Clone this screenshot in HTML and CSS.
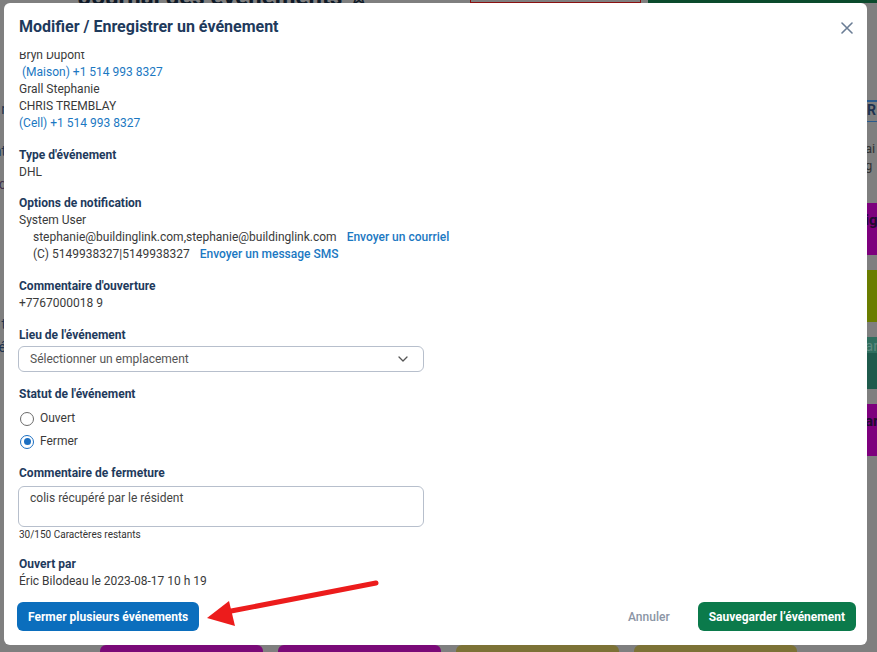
FILE: index.html
```html
<!DOCTYPE html>
<html lang="fr">
<head>
<meta charset="utf-8">
<title>Modifier / Enregistrer un événement</title>
<link rel="stylesheet" href="styles.css">
</head>
<body>
<div class="page">
  <div class="topbar">
    <span class="page-title">Journal des événements ☆</span>
    <span class="spacer"></span>
    <span class="btn-outline-red">Exporter les événements</span>
    <span class="btn-green-bg">Enregistrer un événement</span>
  </div>
  <div class="page-main">
    <div class="left-col">
      <span class="lt l1">r</span>
      <span class="lt l2">nt</span>
      <span class="lt l3">ic</span>
      <span class="lt l4">t</span>
      <span class="lt l5">é</span>
    </div>
    <div class="right-col">
      <div class="tab">R</div>
      <div class="rtext">ai<br>g</div>
      <div class="card c-purple">ig</div>
      <div class="card c-olive"></div>
      <div class="card c-teal"><span class="teal-top">ar</span></div>
      <div class="card c-purple">ar</div>
    </div>
  </div>
  <div class="bottom-cards">
    <div class="bcard b-purple"></div>
    <div class="bcard b-purple"></div>
    <div class="bcard b-olive"></div>
    <div class="bcard b-olive"></div>
  </div>

  <div class="modal">
    <div class="modal-header">
      <h2 class="modal-title">Modifier / Enregistrer un événement</h2>
      <button class="close-btn" aria-label="Fermer">
        <svg width="12" height="12" viewBox="0 0 12 12"><path d="M1 1 L11 11 M11 1 L1 11" stroke="#6a7d95" stroke-width="1.6" stroke-linecap="round" fill="none"/></svg>
      </button>
    </div>
    <div class="modal-body">
      <div class="body-inner">
        <div class="contacts">
          <div>Bryn Dupont</div>
          <div class="link">&nbsp;(Maison) +1 514 993 8327</div>
          <div>Grall Stephanie</div>
          <div>CHRIS TREMBLAY</div>
          <div class="link">(Cell) +1 514 993 8327</div>
        </div>
        <div class="section">
          <div class="label">Type d'événement</div>
          <div>DHL</div>
        </div>
        <div class="section s-options">
          <div class="label">Options de notification</div>
          <div>System User</div>
          <div class="notif">stephanie@buildinglink.com,stephanie@buildinglink.com <a class="action">Envoyer un courriel</a></div>
          <div class="notif">(C) 5149938327|5149938327 <a class="action">Envoyer un message SMS</a></div>
        </div>
        <div class="section">
          <div class="label">Commentaire d'ouverture</div>
          <div>+7767000018 9</div>
        </div>
        <div class="section">
          <div class="label">Lieu de l'événement</div>
          <div class="select">
            <span>Sélectionner un emplacement</span>
            <svg width="10" height="6" viewBox="0 0 10 6"><path d="M1 1 L5 5 L9 1" stroke="#555" stroke-width="1.3" fill="none" stroke-linecap="round" stroke-linejoin="round"/></svg>
          </div>
        </div>
        <div class="section s-status">
          <div class="label">Statut de l'événement</div>
          <div class="radios">
            <div class="radio-row"><span class="radio"></span><span>Ouvert</span></div>
            <div class="radio-row"><span class="radio checked"></span><span>Fermer</span></div>
          </div>
        </div>
        <div class="section s-close">
          <div class="label">Commentaire de fermeture</div>
          <div class="textarea">colis récupéré par le résident</div>
          <div class="counter">30/150 Caractères restants</div>
        </div>
        <div class="section s-opened">
          <div class="label">Ouvert par</div>
          <div>Éric Bilodeau le 2023-08-17 10 h 19</div>
        </div>
      </div>
    </div>
    <div class="modal-footer">
      <button class="btn btn-blue">Fermer plusieurs événements</button>
      <button class="btn-cancel">Annuler</button>
      <button class="btn btn-green">Sauvegarder l’événement</button>
    </div>
  </div>

  <svg class="arrow" width="877" height="652" viewBox="0 0 877 652">
    <line x1="376" y1="583" x2="226" y2="612" stroke="#ec1c1c" stroke-width="5" stroke-linecap="round"/>
    <polygon points="207,618 229,601 235,626" fill="#ec1c1c"/>
  </svg>
</div>
</body>
</html>
```
FILE: styles.css
```css
* { box-sizing: border-box; }
body {
  margin: 0;
  font-family: Roboto, "Noto Sans", "Liberation Sans", sans-serif;
}
.page {
  position: relative;
  width: 877px;
  height: 652px;
  overflow: hidden;
  background: #7f7f7f;
}

/* dimmed background page */
.topbar {
  display: flex;
  align-items: flex-end;
  height: 23px;
  margin-top: -20px;
}
.page-title {
  margin-left: 78px;
  font-size: 24px;
  font-weight: 700;
  color: #0f1a28;
  line-height: 28px;
  margin-bottom: -8px;
}
.spacer { flex: 1; }
.btn-outline-red {
  width: 171px;
  height: 23px;
  border: 1px solid #8a1010;
  color: #7a0c0c;
  font-size: 13px;
  padding-left: 10px;
  margin-right: 7px;
}
.btn-green-bg {
  width: 229px;
  height: 23px;
  background: #0a4a2c;
  color: #6f8a7d;
  font-size: 13px;
  padding-left: 10px;
}
.page-main {
  display: flex;
  height: 642px;
}
.left-col {
  position: relative;
  width: 8px;
  font-size: 14px;
  color: #1e3350;
}
.lt { position: absolute; right: 2px; }
.l1 { top: 98px; }
.l2 { top: 140px; }
.l3 { top: 173px; color: #40304a; }
.l4 { top: 313px; }
.l5 { top: 336px; }
.right-col {
  margin-left: auto;
  width: 200px;
  padding-top: 97px;
  display: flex;
  flex-direction: column;
}
.tab {
  height: 22px;
  border-top: 2px solid #2b5a8c;
  border-bottom: 1px solid #2b5a8c;
  color: #1e3350;
  font-weight: 700;
  font-size: 14px;
  padding-left: 190px;
}
.rtext {
  margin-top: 18px;
  font-size: 13px;
  line-height: 17px;
  color: #333;
  padding-left: 188px;
}
.card {
  height: 52px;
  margin-top: 15px;
  font-weight: 700;
  font-size: 15px;
  color: #200a30;
  padding: 8px 0 0 188px;
}
.rtext + .card { margin-top: 29px; }
.c-purple { background: #7d007d; }
.c-olive { background: #6a7d00; }
.c-teal { background: #1f5a4c; padding: 0; }
.teal-top {
  display: block;
  height: 16px;
  background: #2f6e5e;
  color: #5e8a80;
  padding-left: 188px;
  font-weight: 400;
}
.bottom-cards {
  display: flex;
  gap: 15px;
  padding-left: 100px;
}
.bcard {
  width: 163px;
  height: 20px;
  border-radius: 6px;
}
.b-purple { background: #7a0a78; }
.b-olive { background: #7c7236; }

/* modal */
.modal {
  position: absolute;
  left: 4px;
  top: 3px;
  width: 863px;
  height: 642px;
  background: #fff;
  border-radius: 6px;
  display: flex;
  flex-direction: column;
  font-size: 12px;
  line-height: 17px;
  color: #3a3a3a;
}
.modal-header {
  flex: none;
  height: 49px;
  display: flex;
  align-items: center;
  justify-content: space-between;
  padding: 0 14px 2px 15px;
}
.modal-title {
  margin: 0;
  font-size: 16px;
  font-weight: 700;
  color: #1e3a5c;
}
.close-btn {
  border: 0;
  background: none;
  padding: 0;
  width: 12px;
  height: 12px;
  display: flex;
  margin-top: 2px;
}
.modal-body {
  flex: 1;
  overflow: hidden;
  padding: 0 15px;
}
.body-inner { margin-top: -5px; }
.link { color: #1b78c2; }
.section { margin-top: 15px; }
.s-options { margin-top: 14px; }
.label {
  font-weight: 700;
  color: #1e3a5c;
}
.notif { padding-left: 14px; }
.action {
  color: #1b78c2;
  font-weight: 500;
  margin-left: 7px;
}
.select {
  margin-top: 2px;
  margin-left: -1px;
  width: 406px;
  height: 26px;
  border: 1px solid #b7bfcc;
  border-radius: 6px;
  display: flex;
  align-items: center;
  justify-content: space-between;
  padding: 0 15px 0 11px;
  color: #555;
}
.s-status { margin-top: 14px; }
.radios { margin-top: 4px; }
.radio-row {
  height: 23px;
  display: flex;
  align-items: center;
  gap: 6px;
  padding-left: 1px;
}
.radio {
  width: 14px;
  height: 14px;
  border: 1.5px solid #6b6b6b;
  border-radius: 50%;
  display: flex;
  align-items: center;
  justify-content: center;
}
.radio.checked { border-color: #1b6fc2; }
.radio.checked::after {
  content: "";
  width: 7px;
  height: 7px;
  border-radius: 50%;
  background: #1b6fc2;
}
.s-close { margin-top: 12px; }
.textarea {
  margin-top: 4px;
  margin-left: -1px;
  width: 406px;
  height: 41px;
  border: 1px solid #b7bfcc;
  border-radius: 6px;
  padding: 4px 11px;
  line-height: 14px;
  color: #444;
}
.counter {
  margin-top: 2px;
  font-size: 10px;
  line-height: 12px;
  color: #333;
}
.s-opened { margin-top: 15px; }
.modal-footer {
  flex: none;
  display: flex;
  align-items: center;
  padding: 12px 11px 14px 13px;
}
.btn {
  height: 29px;
  border: 0;
  border-radius: 6px;
  padding: 0 11px;
  font-family: inherit;
  font-size: 12px;
  font-weight: 700;
  color: #fff;
}
.btn-blue { background: #0b6ebd; }
.btn-green { background: #0b7a4b; }
.btn-cancel {
  margin-left: auto;
  margin-right: 14px;
  border: 0;
  background: none;
  padding: 0 14px;
  font-family: inherit;
  font-size: 12px;
  font-weight: 500;
  color: #8b95a5;
}
.arrow {
  position: absolute;
  left: 0;
  top: 0;
  pointer-events: none;
}
```
